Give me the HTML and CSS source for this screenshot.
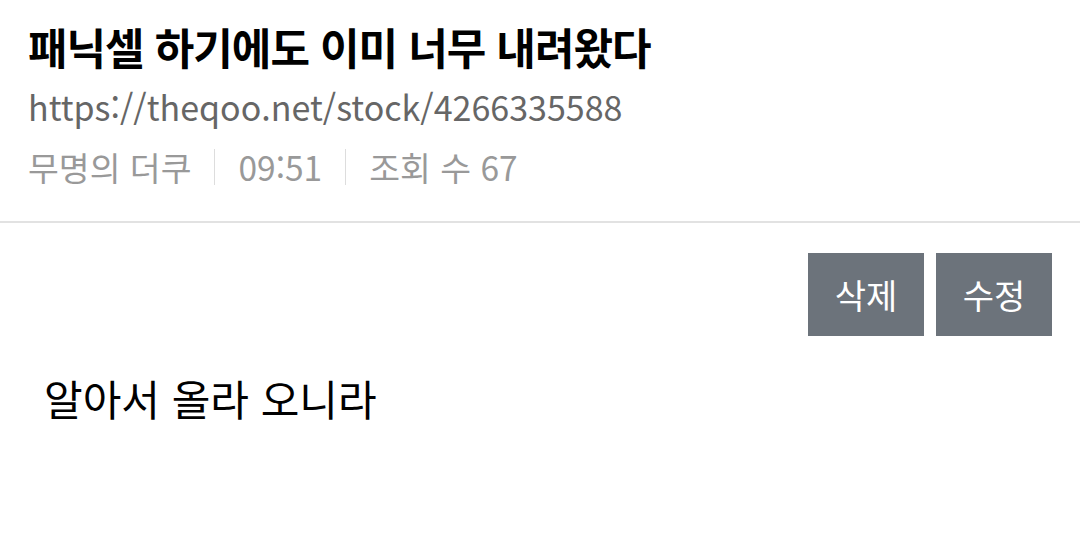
FILE: index.html
```html
<!DOCTYPE html>
<html lang="ko">
  <head>
    <meta charset="UTF-8" />
    <meta name="viewport" content="width=device-width, initial-scale=1.0" />
    <title>패닉셀 하기에도 이미 너무 내려왔다</title>
    <link rel="stylesheet" href="styles.css">
  </head>
  <body>
    <div class="post-header">
      <h1 class="post-title">패닉셀 하기에도 이미 너무 내려왔다</h1>
      <div class="post-url">https://theqoo.net/stock/4266335588</div>
      <div class="post-meta">
        <span class="meta-item">무명의 더쿠</span>
        <span class="meta-sep"></span>
        <span class="meta-item">09:51</span>
        <span class="meta-sep"></span>
        <span class="meta-item">조회 수 67</span>
      </div>
    </div>

    <div class="post-actions">
      <button class="button action-button">삭제</button>
      <button class="button action-button">수정</button>
    </div>

    <div class="post-body">알아서 올라 오니라</div>
  </body>
</html>
```

FILE: styles.css
```css
body {
  margin: 0;
  background: #fff;
  font-family: 'Noto Sans CJK KR', 'Noto Sans', sans-serif;
  color: #000;
}

.post-header {
  padding: 15px 28px 24px;
  border-bottom: 2px solid #e2e2e2;
}

.post-title {
  margin: 0;
  font-size: 43px;
  font-weight: bold;
  line-height: 62px;
  letter-spacing: -1px;
}

.post-url {
  font-size: 34px;
  line-height: 60px;
  color: #666;
}

.post-meta {
  display: flex;
  align-items: center;
  gap: 23px;
  font-size: 33.5px;
  line-height: 60px;
  color: #999;
}

.meta-sep {
  width: 1px;
  height: 36px;
  background: #ddd;
}

.button {
  border: none;
  cursor: pointer;
  font-family: inherit;
}

.post-actions {
  display: flex;
  justify-content: flex-end;
  gap: 12px;
  padding: 30px 28px 0;
}

.action-button {
  width: 116px;
  height: 83px;
  background: #6c737b;
  color: #fff;
  font-size: 34px;
}

.post-body {
  padding: 32px 44px;
  font-size: 42px;
  line-height: 60px;
}
```
